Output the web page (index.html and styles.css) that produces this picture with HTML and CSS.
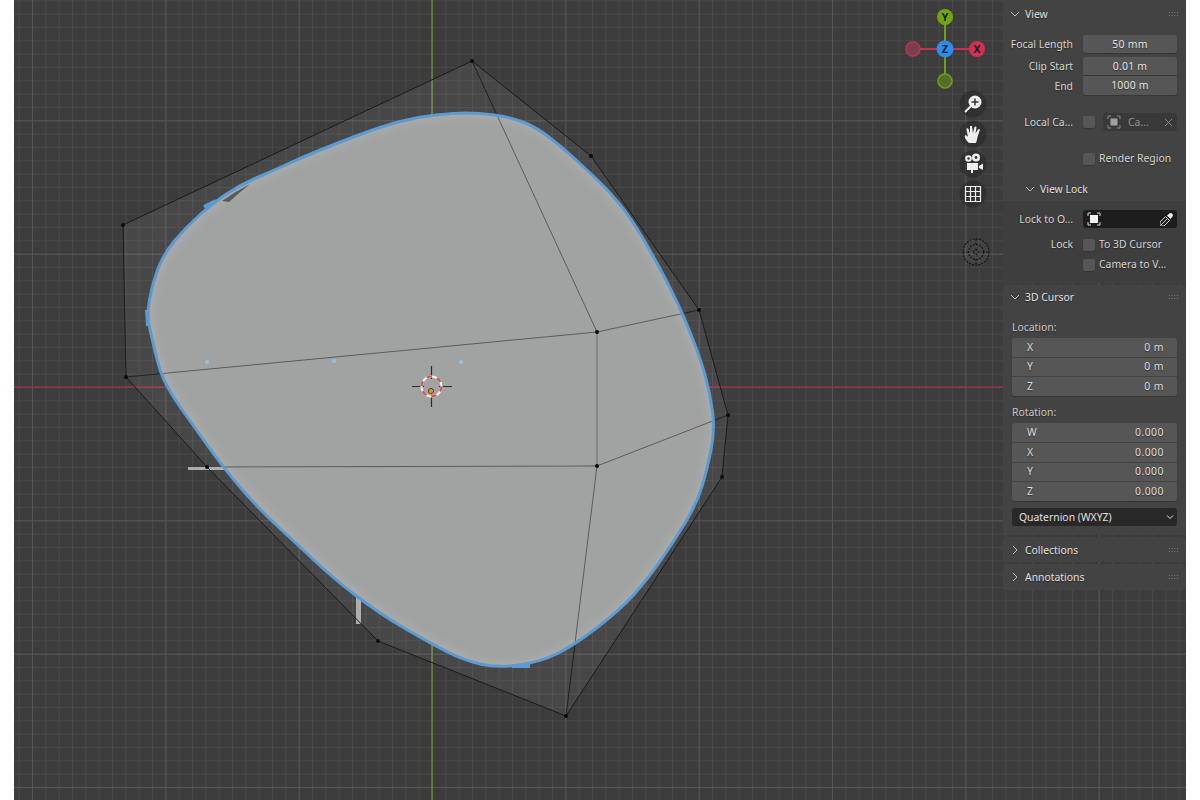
FILE: index.html
```html
<!DOCTYPE html>
<html lang="en">
<head>
<meta charset="utf-8">
<title>3D Viewport</title>
<link rel="stylesheet" href="styles.css">
</head>
<body>
<main class="viewport">
  <svg class="scene" viewBox="14 0 1172 800" aria-hidden="true">
    <defs>
      <pattern id="minor" width="13.333" height="13.333" patternUnits="userSpaceOnUse" patternTransform="translate(432 387)">
        <path d="M0 0V13.333M0 0H13.333" class="grid-minor"/>
      </pattern>
      <pattern id="major" width="133.33" height="133.33" patternUnits="userSpaceOnUse" patternTransform="translate(432 387)">
        <path d="M0 0V133.33M0 0H133.33" class="grid-major"/>
      </pattern>
      <filter id="soft" x="-5%" y="-5%" width="110%" height="110%"><feGaussianBlur stdDeviation="4"/></filter>
      <path id="outline" d="M466.5 113Q478 113 494 115Q510 117 523 122Q536 127 549.5 137.5Q563 148 575 159Q587 170 598.5 181Q610 192 620 204.5Q630 217 641.5 236Q653 255 666.500 281Q680 307 690 332Q700 357 705 375Q710 393 712.5 411.5Q715 430 711 450Q707 470 702 486.5Q697 503 685 523Q673 543 660 561.5Q647 580 633.5 595Q620 610 596.5 628Q573 646 556.5 654Q540 662 518.5 665Q497 668 480 664Q463 660 446.5 651.5Q430 643 405 628.5Q380 614 356.5 596Q333 578 316.5 562.5Q300 547 280 528.5Q260 510 242.5 490Q225 470 207.5 445.5Q190 421 181.5 409Q173 397 166.5 385Q160 373 155 351.5Q150 330 148.5 322.5Q147 315 149.5 300Q152 285 157.5 270Q163 255 174 241.5Q185 228 199 215.5Q213 203 226.5 194Q240 185 255 178.500Q270 172 286.5 164.5Q303 157 321.5 149.5Q340 142 361.5 134Q383 126 400 121.5Q417 117 436 115Q455 113 466.5 113Z"/>
      <clipPath id="inside"><use href="#outline"/></clipPath>
    </defs>
    <rect x="14" y="0" width="1172" height="800" fill="url(#minor)"/>
    <rect x="14" y="0" width="1172" height="800" fill="url(#major)"/>
    <path d="M14 387H1003" class="axis-x"/>
    <path d="M432 0V800" class="axis-y"/>
    <polygon class="cage-fill" points="472,61 591,156 699,310 728,415 722,477 566,716 378,641 207,467 126,377 123,225"/>
    <rect x="188" y="467" width="40" height="3" class="stub"/>
    <rect x="356" y="596" width="5" height="28" class="stub"/>
    <polygon class="cage" points="472,61 591,156 699,310 728,415 722,477 566,716 378,641 207,467 126,377 123,225"/>
    <path class="inner-out" d="M472 61L597 332L699 310M597 332L126 377M597 466L728 415M597 466L566 716"/>
    <use href="#outline" class="body"/>
    <g clip-path="url(#inside)"><use href="#outline" class="rim" filter="url(#soft)"/></g>
    <path class="sliver" d="M222 201Q236 191 250 184Q240 192 229 202Z"/>
    <g clip-path="url(#inside)">
      <path class="inner" d="M472 61L597 332L699 310M597 332L126 377M597 466L207 467M597 466L728 415M597 466L566 716"/>
      <path class="inner-v" d="M597 332V466"/>
    </g>
    <use href="#outline" class="blue"/>
    <path class="ticks" d="M204 207L216 201M147 310L148 326M512 666H530"/>
    <g class="verts">
      <circle cx="472" cy="61" r="2"/><circle cx="591" cy="156" r="2"/><circle cx="699" cy="310" r="2"/><circle cx="728" cy="415" r="2"/><circle cx="722" cy="477" r="2"/><circle cx="566" cy="716" r="2"/><circle cx="378" cy="641" r="2"/><circle cx="207" cy="467" r="2"/><circle cx="126" cy="377" r="2"/><circle cx="123" cy="225" r="2"/><circle cx="597" cy="332" r="2"/><circle cx="597" cy="466" r="2"/>
    </g>
    <g class="points">
      <circle cx="207" cy="362" r="2"/><circle cx="334" cy="361" r="2"/><circle cx="461" cy="362" r="2"/>
    </g>
    <g class="cursor">
      <path class="cursor-cross" d="M431.5 366V379M431.5 395V407M412 386.5H424M439 386.5H452"/>
      <circle class="cursor-w" cx="431.5" cy="386.5" r="10"/>
      <circle class="cursor-r" cx="431.5" cy="386.5" r="10"/>
      <circle class="cursor-o" cx="431" cy="391" r="2.6"/>
    </g>
    <g class="gizmo">
      <path class="gz-red" d="M913 49H977"/>
      <path class="gz-green" d="M945 17V81"/>
      <circle cx="913" cy="49" r="7" class="gz-nx"/>
      <circle cx="945" cy="81" r="7" class="gz-ny"/>
      <circle cx="977" cy="49" r="8" class="gz-x"/>
      <circle cx="945" cy="17" r="8" class="gz-y"/>
      <circle cx="945" cy="49" r="8.5" class="gz-z"/>
      <text x="977" y="53" class="gz-label">X</text>
      <text x="945" y="21" class="gz-label">Y</text>
      <text x="945" y="53" class="gz-label">Z</text>
    </g>
    <g class="nav">
      <circle cx="973" cy="104" r="13.5"/><circle cx="973" cy="134" r="13.5"/><circle cx="973" cy="164" r="13.5"/><circle cx="973" cy="194" r="13.5"/>
    </g>
    <g class="nav-icon">
      <circle cx="975" cy="102" r="6.5"/>
      <path class="ic-line" d="M970 107L965.5 111.5"/>
      <path class="ic-plus" d="M975 98.500V105.500M971.500 102H978.500"/>
      <path d="M969 143C966 140 964 137 965 135.500C966 134.500 967.500 136 968 137L966.500 129.500C966.500 128 968 128 968.500 129L970 133.500L970 126.500C970.500 125.500 972 125.500 972 126.500L973 133L974.500 127C975 126 976.500 126.500 976.500 127.500L975.500 133.500L978 129.500C978.500 128.500 980 129 979.800 130L977.500 137C977 140 976.500 141.500 976 143Z"/>
      <circle cx="968.500" cy="158.500" r="3.300"/><circle cx="976" cy="157.500" r="4"/>
      <circle cx="968.500" cy="158.500" r="1.200" class="ic-hole"/><circle cx="976" cy="157.500" r="1.400" class="ic-hole"/>
      <rect x="967" y="163" width="11" height="7"/>
      <path d="M979 166L983 163.500V170L979 168Z"/>
      <rect x="971" y="170" width="2" height="3"/>
      <path class="ic-grid" d="M965.500 186.500H980.500V201.500H965.500ZM965.500 191.500H980.500M965.500 196.500H980.500M970.500 186.500V201.500M975.500 186.500V201.500"/>
    </g>
    <g class="roll">
      <circle cx="976" cy="252" r="13"/>
      <circle cx="976" cy="252" r="7.500"/>
      <path d="M976 249L979 252L976 255L973 252Z"/>
      <path d="M963 252H969M983 252H989M976 239V245M976 259V265"/>
    </g>
  </svg>

  <aside class="sidebar">
    <section class="panel">
      <header class="head"><svg class="chev" viewBox="0 0 10 10"><path d="M1 3L5 7L9 3"/></svg><span class="head-title">View</span><span class="grip"></span></header>
      <div class="body-view">
        <div class="row"><span class="lbl">Focal Length</span><span class="field center">50 mm</span></div>
        <div class="stack-2">
          <div class="row"><span class="lbl">Clip Start</span><span class="field center joined-top">0.01 m</span></div>
          <div class="row"><span class="lbl lbl-low">End</span><span class="field center joined-bottom">1000 m</span></div>
        </div>
        <div class="row row-local">
          <span class="lbl">Local Ca...</span>
          <span class="local">
            <span class="check"></span>
            <span class="picker dim-picker">
              <svg class="obj-icon dim" viewBox="0 0 14 14"><path class="corners" d="M1 4V1H4M10 1H13V4M13 10V13H10M4 13H1V10"/><rect x="3.500" y="3.500" width="7" height="7"/></svg>
              <span class="picker-text">Ca...</span>
              <svg class="x-icon" viewBox="0 0 10 10"><path d="M1 1L9 9M9 1L1 9"/></svg>
            </span>
          </span>
        </div>
        <div class="row row-render"><span></span><label class="checkrow"><span class="check"></span>Render Region</label></div>
      </div>
      <header class="head sub-head"><svg class="chev" viewBox="0 0 10 10"><path d="M1 3L5 7L9 3"/></svg><span class="head-title">View Lock</span></header>
      <div class="body-lock">
        <div class="row">
          <span class="lbl">Lock to O...</span>
          <span class="picker dark-picker">
            <svg class="obj-icon" viewBox="0 0 14 14"><path class="corners" d="M1 4V1H4M10 1H13V4M13 10V13H10M4 13H1V10"/><rect x="3" y="3" width="8" height="8"/></svg>
            <svg class="drop-icon" viewBox="0 0 14 14"><path class="drop-a" d="M1 13L7 7"/><path class="drop-b" d="M5.500 4.500L9.500 8.500L4 14H0V10Z"/><path class="drop-c" d="M7 3.500L9.500 1.500C11 0 14 3 12.500 4.500L10.500 7Z"/></svg>
          </span>
        </div>
        <div class="row row-lock"><span class="lbl">Lock</span><label class="checkrow"><span class="check"></span>To 3D Cursor</label></div>
        <div class="row row-cam"><span></span><label class="checkrow"><span class="check"></span>Camera to V...</label></div>
      </div>
    </section>

    <section class="panel panel-cursor">
      <header class="head head-cursor"><svg class="chev" viewBox="0 0 10 10"><path d="M1 3L5 7L9 3"/></svg><span class="head-title">3D Cursor</span><span class="grip"></span></header>
      <div class="body-cursor">
        <div class="cap cap-loc">Location:</div>
        <div class="vec vec-3">
          <div class="vrow"><span>X</span><span class="num">0 m</span></div>
          <div class="vrow"><span>Y</span><span class="num">0 m</span></div>
          <div class="vrow"><span>Z</span><span class="num">0 m</span></div>
        </div>
        <div class="cap cap-rot">Rotation:</div>
        <div class="vec vec-4">
          <div class="vrow"><span>W</span><span class="num">0.000</span></div>
          <div class="vrow"><span>X</span><span class="num">0.000</span></div>
          <div class="vrow"><span>Y</span><span class="num">0.000</span></div>
          <div class="vrow"><span>Z</span><span class="num">0.000</span></div>
        </div>
        <div class="select"><span>Quaternion (WXYZ)</span><svg class="select-chev" viewBox="0 0 10 10"><path d="M2 3.500L5 6.500L8 3.500"/></svg></div>
      </div>
    </section>

    <section class="panel panel-closed panel-coll">
      <header class="head head-closed"><svg class="chev" viewBox="0 0 10 10"><path d="M3 1L7 5L3 9"/></svg><span class="head-title">Collections</span><span class="grip"></span></header>
    </section>
    <section class="panel panel-closed panel-anno">
      <header class="head head-closed"><svg class="chev" viewBox="0 0 10 10"><path d="M3 1L7 5L3 9"/></svg><span class="head-title">Annotations</span><span class="grip"></span></header>
    </section>
  </aside>
</main>
</body>
</html>
```

FILE: styles.css
```css
* { box-sizing: border-box; }
html, body { margin: 0; height: 100%; background: #fff; }
body {
  padding: 0 14px;
  font-family: "Noto Sans", "Open Sans", sans-serif;
  font-size: 10.4px;
  color: #d4d4d4;
}
.viewport { position: relative; height: 800px; background: #3c3c3c; overflow: hidden; }
.scene { position: absolute; inset: 0; width: 100%; height: 100%; display: block; }

.grid-minor { stroke: #4c4c4c; stroke-width: 1.6; fill: none; }
.grid-major { stroke: #5a5a5a; stroke-width: 1.5; fill: none; }
.axis-x { stroke: #9a3245; stroke-width: 1.3; fill: none; }
.axis-y { stroke: #6b9232; stroke-width: 1.3; fill: none; }
.cage-fill { fill: rgba(255,255,255,0.06); }
.cage { fill: none; stroke: #1a1a1a; stroke-width: 1; }
.inner-out { fill: none; stroke: #222; stroke-width: 1; }
.stub { fill: #aeaeae; }
.body { fill: #a1a2a2; }
.rim { fill: none; stroke: #b0b0b0; stroke-width: 6; }
.sliver { fill: #5a5a5a; }
.inner { fill: none; stroke: #5c5c5c; stroke-width: 1; }
.inner-v { fill: none; stroke: #7c7c7c; stroke-width: 1.4; }
.blue { fill: none; stroke: #5b9bd2; stroke-width: 3; stroke-linejoin: round; }
.ticks { fill: none; stroke: #5b9bd2; stroke-width: 4; }
.verts circle { fill: #0c0c0c; }
.points circle { fill: #90c4e8; }
.cursor-cross { stroke: #2c2c2c; stroke-width: 1.2; fill: none; }
.cursor-w { fill: none; stroke: #f0f0f0; stroke-width: 2; }
.cursor-r { fill: none; stroke: #d84a4a; stroke-width: 2; stroke-dasharray: 5.2 5.3; }
.cursor-o { fill: #f08a1c; stroke: #333; stroke-width: 0.8; }

.gz-red { stroke: #c8304e; stroke-width: 2; fill: none; }
.gz-green { stroke: #6f9f12; stroke-width: 2; fill: none; }
.gz-nx { fill: #77404e; stroke: #c8304e; stroke-width: 1.6; }
.gz-ny { fill: #566d30; stroke: #6f9f12; stroke-width: 1.6; }
.gz-x { fill: #d3304f; }
.gz-y { fill: #72a60f; }
.gz-z { fill: #2d8cf0; }
.gz-label { font: bold 11px "Noto Sans", sans-serif; fill: #16202c; text-anchor: middle; }

.nav circle { fill: rgba(34,34,34,0.45); }
.nav-icon { fill: #efefef; }
.ic-line { fill: none; stroke: #efefef; stroke-width: 2; stroke-linecap: round; }
.ic-plus { fill: none; stroke: #2e2e2e; stroke-width: 1.4; }
.ic-hole { fill: #333; }
.ic-grid { fill: none; stroke: #efefef; stroke-width: 1.2; }
.roll circle, .roll path { fill: none; stroke: #141414; stroke-width: 1.1; stroke-dasharray: 2 1.2; }
.roll circle:first-child { fill: rgba(255,255,255,0.04); }

.sidebar { position: absolute; top: 0; right: 0; width: 183px; }
.panel { background: #434343; border-radius: 0 0 4px 4px; }
.panel-cursor { margin-top: 2px; padding-bottom: 9px; border-radius: 4px; }
.panel-closed { margin-top: 2px; border-radius: 4px; }
.head {
  display: flex;
  align-items: center;
  height: 28px;
  padding: 0 7px 1px 7px;
  text-shadow: 0 1px 1px #2a2a2a;
  color: #e0e0e0;
}
.panel-coll .head { padding-bottom: 0; }
.chev { width: 10px; height: 10px; margin-right: 5px; flex: none; }
.chev path { fill: none; stroke: #bbb; stroke-width: 1; }
.head-title { flex: 1; }
.grip {
  width: 11px;
  height: 6px;
  background: radial-gradient(circle, #808080 0.75px, transparent 0.9px) 0 0 / 2.75px 3px;
}
.body-view { padding-top: 7px; }
.row {
  display: grid;
  grid-template-columns: 70px 94px;
  column-gap: 10px;
  align-items: center;
  height: 18px;
}
.lbl { text-align: right; white-space: nowrap; text-shadow: 0 1px 1px #2a2a2a; padding-bottom: 1px; }
.lbl-low { padding-bottom: 0; }
.field {
  display: block;
  height: 18px;
  line-height: 18px;
  background: #565656;
  border-radius: 3px;
  color: #e4e4e4;
  letter-spacing: 0.25px;
  text-shadow: 0 1px 1px #333;
  box-shadow: 0 1px 1px #363636;
}
.center { text-align: center; }
.joined-top { border-radius: 3px 3px 0 0; }
.joined-bottom { border-radius: 0 0 3px 3px; height: 19px; line-height: 18px; }
.stack-2 { display: grid; row-gap: 1px; margin-top: 4px; }
.stack-2 .row:last-child { height: 19px; }
.row-local { margin-top: 18px; }
.local { display: flex; align-items: center; gap: 8px; }
.check {
  flex: none;
  width: 12px;
  height: 12px;
  background: #565656;
  border-radius: 2px;
  box-shadow: 0 1px 1px #363636;
}
.picker { display: flex; align-items: center; height: 18px; border-radius: 3px; }
.dim-picker { flex: 1; background: #393939; padding: 0 4px 0 4px; color: #8f8f8f; }
.picker-text { flex: 1; margin-left: 7px; padding-bottom: 1px; }
.dark-picker { background: #1d1d1d; justify-content: space-between; padding: 0 3px 0 4px; }
.obj-icon { width: 14px; height: 14px; }
.obj-icon .corners { fill: none; stroke: #d8d8d8; stroke-width: 1; }
.obj-icon rect { fill: #f2f2f2; }
.obj-icon.dim .corners { stroke: #8a8a8a; }
.obj-icon.dim rect { fill: #a0a0a0; }
.x-icon { width: 9px; height: 9px; }
.x-icon path { fill: none; stroke: #8f8f8f; stroke-width: 1; }
.drop-icon { width: 14px; height: 14px; }
.drop-a { fill: none; stroke: #c8c8c8; stroke-width: 1; }
.drop-b { fill: none; stroke: #cfcfcf; stroke-width: 1; }
.drop-c { fill: #e8e8e8; }
.row-render { margin-top: 18px; }
.checkrow { display: flex; align-items: center; gap: 4px; white-space: nowrap; text-shadow: 0 1px 1px #2a2a2a; line-height: 17px; }
.checkrow .check { margin-top: 1px; }
.sub-head { height: 24px; margin-top: 10px; padding-left: 22px; }
.body-lock { background: #3e3e3e; padding: 9px 0 10px; border-radius: 0 0 4px 4px; }
.row-lock { margin-top: 7px; }
.row-cam { margin-top: 2px; }
.head-cursor { height: 24px; }
.body-cursor { padding: 0 9px; }
.cap { height: 18px; line-height: 18px; color: #c8c8c8; text-shadow: 0 1px 1px #2a2a2a; }
.cap-loc { margin-top: 9px; }
.cap-rot { margin-top: 7px; }
.vec { display: grid; row-gap: 1px; margin-top: 2px; border-radius: 3px; overflow: hidden; box-shadow: 0 1px 1px #363636; }
.vec-3 { height: 58px; grid-template-rows: repeat(3, 1fr); }
.vec-4 { height: 78px; grid-template-rows: repeat(4, 1fr); }
.vrow {
  display: flex;
  justify-content: space-between;
  align-items: center;
  padding: 0 13px 1px 15px;
  background: #565656;
  color: #dcdcdc;
  text-shadow: 0 1px 1px #333;
}
.num { letter-spacing: 0.5px; }
.select {
  display: flex;
  align-items: center;
  justify-content: space-between;
  height: 18px;
  margin-top: 7px;
  padding: 0 2px 1px 7px;
  background: #282828;
  border-radius: 3px;
  color: #e0e0e0;
}
.select-chev { width: 10px; height: 10px; }
.select-chev path { fill: none; stroke: #ddd; stroke-width: 1; }
.head-closed { height: 25px; }
.panel-anno .head-closed { height: 26px; }
```
